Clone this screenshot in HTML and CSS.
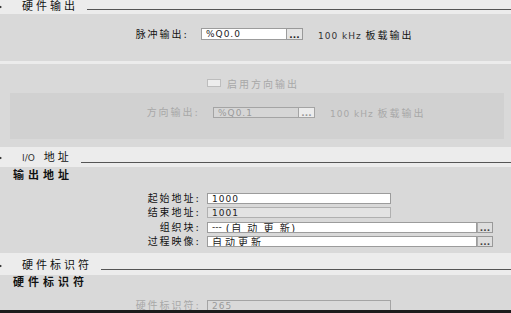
FILE: index.html
```html
<!DOCTYPE html>
<html lang="zh-CN">
<head>
  <meta charset="UTF-8">
  <title>脉冲发生器属性</title>
  <link rel="stylesheet" href="styles.css">
</head>
<body>
  <div class="sec-head head-top">
    <span class="arrow"></span>
    <span class="title">硬件输出</span>
    <span class="rule"></span>
  </div>
  <div class="panel panel-pulse">
    <div class="field">
      <span class="label label-pulse">脉冲输出:</span>
      <div class="picker picker-short">
        <span class="box">%Q0.0</span>
        <span class="btn">...</span>
      </div>
      <span class="note">100 kHz <span class="cjk">板载输出</span></span>
    </div>
  </div>
  <div class="panel panel-dir">
    <div class="check-row">
      <span class="check"></span>
      <span class="check-text">启用方向输出</span>
    </div>
    <div class="subpanel">
      <div class="field off">
        <span class="label label-dir">方向输出:</span>
        <div class="picker picker-short">
          <span class="box">%Q0.1</span>
          <span class="btn">...</span>
        </div>
        <span class="note">100 kHz <span class="cjk">板载输出</span></span>
      </div>
    </div>
  </div>

  <div class="sec-head head-io">
    <span class="arrow"></span>
    <span class="title"><span class="latin">I/O</span>地址</span>
    <span class="rule"></span>
  </div>
  <div class="panel panel-io">
    <div class="group-title">输出地址</div>
    <div class="rows">
      <div class="field">
        <span class="label">起始地址:</span>
        <span class="box box-mid">1000</span>
      </div>
      <div class="field">
        <span class="label">结束地址:</span>
        <span class="box box-mid box-ro">1001</span>
      </div>
      <div class="field">
        <span class="label">组织块:</span>
        <div class="picker picker-long">
          <span class="box"><span class="dashes">---</span><span class="cjk-spaced">(自 动 更 新)</span></span>
          <span class="btn">...</span>
        </div>
      </div>
      <div class="field">
        <span class="label">过程映像:</span>
        <div class="picker picker-long">
          <span class="box"><span class="cjk-wide">自动更新</span></span>
          <span class="btn">...</span>
        </div>
      </div>
    </div>
  </div>

  <div class="sec-head head-hw">
    <span class="arrow"></span>
    <span class="title">硬件标识符</span>
    <span class="rule"></span>
  </div>
  <div class="panel panel-hw">
    <div class="group-title">硬件标识符</div>
    <div class="field off">
      <span class="label">硬件标识符:</span>
      <span class="box box-mid">265</span>
    </div>
  </div>
  <div class="bottom-bar"></div>
</body>
</html>
```

FILE: styles.css
```css
body {
  margin: 0;
  width: 511px;
  height: 313px;
  overflow: hidden;
  background: #ececec;
  color: #111;
  font-family: "DejaVu Sans", "Noto Sans CJK SC", sans-serif;
  font-size: 10px;
}

/* section headers */
.sec-head {
  display: flex;
  align-items: center;
  box-sizing: border-box;
  font-size: 11px;
  letter-spacing: 3px;
  line-height: 12px;
}
.head-top { height: 14px; }
.head-io { height: 20px; padding-top: 2px; }
.head-hw { height: 22px; padding-top: 4px; }
.sec-head .arrow {
  width: 0;
  height: 0;
  margin-left: -3px;
  margin-right: 20px;
  border-left: 5px solid #222;
  border-top: 3px solid transparent;
  border-bottom: 3px solid transparent;
}
.sec-head .title {
  margin-right: 9px;
  white-space: nowrap;
}
.sec-head .latin {
  font-size: 9px;
  letter-spacing: 0;
  margin-right: 9px;
  color: #333;
}
.sec-head .rule {
  flex: 1;
  height: 1px;
  background: #555;
}
.head-top .rule { margin-top: 4px; }
.head-io .rule { margin-top: 8px; }
.head-hw .rule { margin-top: 6px; }

/* panels */
.panel {
  background: #d9d9d9;
  box-sizing: border-box;
  overflow: hidden;
}
.panel-pulse { height: 47px; padding-top: 14px; }
.panel-dir { height: 83px; margin-top: 3px; padding-top: 13px; }
.panel-io { height: 86px; padding-top: 3px; }
.panel-hw { height: 35px; padding-top: 2px; }

.subpanel {
  background: #d1d1d1;
  margin: 4px 7px 0 10px;
  height: 46px;
  box-sizing: border-box;
  padding-top: 14px;
}

.group-title {
  font-size: 11px;
  font-weight: bold;
  letter-spacing: 4px;
  line-height: 12px;
  padding-left: 13px;
  margin-bottom: 11px;
}

.rows {
  display: flex;
  flex-direction: column;
  gap: 3.3px;
}

/* fields */
.field {
  display: flex;
  align-items: center;
  height: 11px;
}
.panel-pulse .field { height: 12px; }

.label {
  width: 201px;
  flex: none;
  text-align: right;
  letter-spacing: 2px;
  margin-right: 6px;
  white-space: nowrap;
  line-height: 11px;
}
.label-pulse { width: 189px; margin-right: 12px; }
.label-dir { width: 190px; margin-right: 13px; }

.box {
  display: flex;
  align-items: center;
  box-sizing: border-box;
  height: 100%;
  border: 1px solid #9c9c9c;
  background: #fff;
  padding-left: 4px;
  font-size: 9px;
  letter-spacing: 1px;
  color: #222;
  white-space: pre;
  overflow: hidden;
}
.box-mid { width: 184px; }
.box-ro { background: #e3e3e3; border-color: #b0b0b0; }

.picker {
  display: flex;
  height: 100%;
}
.picker .box { flex: 1; }
.picker-short { width: 102px; }
.picker-long { width: 286px; }

.btn {
  width: 16px;
  flex: none;
  box-sizing: border-box;
  height: 100%;
  display: flex;
  align-items: flex-end;
  justify-content: center;
  border: 1px solid #999;
  border-left: none;
  background: #e4e4e4;
  font-size: 9px;
  font-weight: bold;
  line-height: 8px;
  letter-spacing: 0;
  color: #222;
}
.picker-long .btn {
  border-left: 1px solid #aaa;
  background: #dedede;
  color: #444;
}

.dashes {
  letter-spacing: 0;
  margin-right: 4px;
}
.cjk-spaced {
  font-size: 10px;
  letter-spacing: 1.5px;
}
.cjk-wide {
  font-size: 10px;
  letter-spacing: 3px;
}

.note {
  margin-left: 15px;
  font-size: 9px;
  letter-spacing: 1px;
  color: #333;
  white-space: nowrap;
}
.note .cjk {
  font-size: 10px;
  letter-spacing: 2px;
  color: #111;
}

/* disabled rows */
.off .label,
.off .note,
.off .note .cjk { color: #a8a8a8; }
.off .box {
  background: #d6d6d6;
  border-color: #a4a4a4;
  color: #9a9a9a;
}
.off .btn {
  background: #ececec;
  border-color: #a4a4a4;
  color: #999;
}
.panel-hw .off .box { background: #d9d9d9; }

/* checkbox */
.check-row {
  display: flex;
  align-items: center;
  height: 12px;
  padding-left: 207px;
}
.check {
  width: 14px;
  height: 8px;
  box-sizing: border-box;
  border: 1px solid #bdbdbd;
  background: #ededed;
  margin-right: 6px;
}
.check-text {
  letter-spacing: 2px;
  color: #a8a8a8;
}

.bottom-bar {
  height: 3px;
  background: #1c1c1c;
}
```
